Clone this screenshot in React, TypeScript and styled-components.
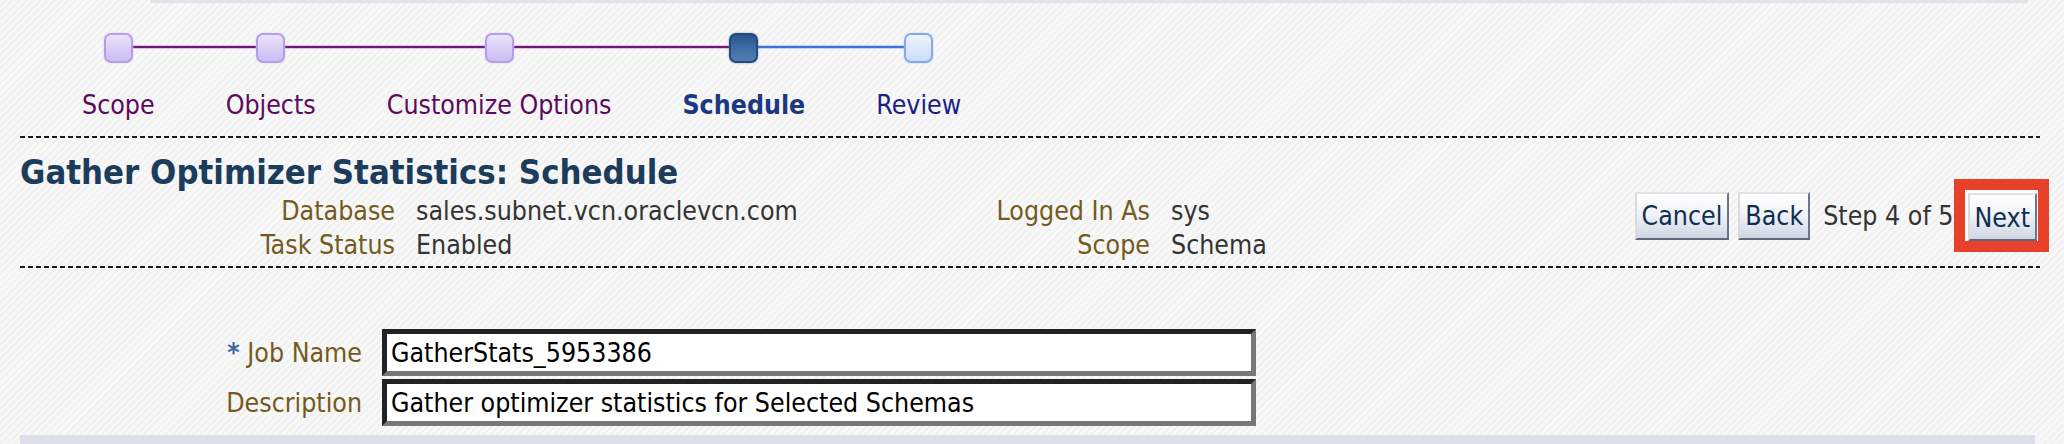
import React from "react";
import styled, { createGlobalStyle, css } from "styled-components";

const GlobalStyle = createGlobalStyle`
  html, body {
    margin: 0;
    padding: 0;
  }
  body {
    width: 2064px;
    height: 444px;
    overflow: hidden;
    background-color: #f6f6f6;
    background-image: repeating-linear-gradient(
      135deg,
      #f8f8f8 0px,
      #f8f8f8 3px,
      #f1f1f1 3px,
      #f1f1f1 5px
    );
    font-family: "DejaVu Sans Condensed", "DejaVu Sans", Verdana, sans-serif;
    font-stretch: condensed;
  }
`;

type StepState = "done" | "current" | "todo";

const steps: { label: string; state: StepState }[] = [
  { label: "Scope", state: "done" },
  { label: "Objects", state: "done" },
  { label: "Customize Options", state: "done" },
  { label: "Schedule", state: "current" },
  { label: "Review", state: "todo" },
];

const PURPLE_LINE = "#6c1a78";
const BLUE_LINE = "#3f6fd8";

export default function App() {
  return (
    <>
      <GlobalStyle />
      <Page>
        <TopBar />
        <Train>
          {steps.map((s, i) => {
            const leftColor =
              i > 0 ? (s.state === "todo" ? BLUE_LINE : PURPLE_LINE) : undefined;
            const rightColor =
              i < steps.length - 1
                ? steps[i + 1].state === "todo"
                  ? BLUE_LINE
                  : PURPLE_LINE
                : undefined;
            return (
              <Step key={s.label}>
                <NodeRow $left={leftColor} $right={rightColor}>
                  <Node $state={s.state} />
                </NodeRow>
                <StepLabel $state={s.state}>{s.label}</StepLabel>
              </Step>
            );
          })}
        </Train>
        <Dashed $gap={16} />
        <Header>
          <Title>Gather Optimizer Statistics: Schedule</Title>
          <InfoGrid>
            <InfoLabel>Database</InfoLabel>
            <InfoValue>sales.subnet.vcn.oraclevcn.com</InfoValue>
            <InfoLabel>Logged In As</InfoLabel>
            <InfoValue>sys</InfoValue>
            <InfoLabel>Task Status</InfoLabel>
            <InfoValue>Enabled</InfoValue>
            <InfoLabel>Scope</InfoLabel>
            <InfoValue>Schema</InfoValue>
          </InfoGrid>
          <Actions>
            <Button>Cancel</Button>
            <Button>Back</Button>
            <StepText>Step 4 of 5</StepText>
            <Highlight>
              <Button>Next</Button>
            </Highlight>
          </Actions>
        </Header>
        <Dashed $gap={4} />
        <Form>
          <FieldLabel>
            <Required>*</Required> Job Name
          </FieldLabel>
          <TextBox>GatherStats_5953386</TextBox>
          <FieldLabel>Description</FieldLabel>
          <TextBox>Gather optimizer statistics for Selected Schemas</TextBox>
        </Form>
        <BottomBand />
      </Page>
    </>
  );
}

const Page = styled.div`
  display: flex;
  flex-direction: column;
  padding: 0 24px 0 20px;
`;

const TopBar = styled.div`
  height: 3px;
  margin-left: 130px;
  width: 1878px;
  background: #dfe3ea;
`;

const Train = styled.div`
  display: flex;
  gap: 71px;
  margin-top: 30px;
  padding-left: 62px;
`;

const Step = styled.div`
  display: flex;
  flex-direction: column;
  align-items: center;
`;

const lineHalf = (color: string, side: "left" | "right") => css`
  content: "";
  position: absolute;
  top: 12px;
  height: 5px;
  background: linear-gradient(
    ${color === BLUE_LINE ? "#c3d3f5" : "#dcc3e0"} 0 1px,
    ${color} 1px 3px,
    ${color === BLUE_LINE ? "#c3d3f5" : "#dcc3e0"} 3px 4px,
    transparent 4px
  );
  ${side === "left" ? "left: -36px; right: 50%;" : "left: 50%; right: -36px;"}
`;

const NodeRow = styled.div<{ $left?: string; $right?: string }>`
  position: relative;
  align-self: stretch;
  display: flex;
  justify-content: center;
  height: 30px;
  &::before {
    ${(p) => (p.$left ? lineHalf(p.$left, "left") : "display: none;")}
  }
  &::after {
    ${(p) => (p.$right ? lineHalf(p.$right, "right") : "display: none;")}
  }
`;

const nodeStyles: Record<StepState, ReturnType<typeof css>> = {
  done: css`
    background: linear-gradient(#ebe3fc, #cbbcf2);
    border: 2px solid #b69ced;
    box-shadow: 0 0 2px #d7c9f6;
  `,
  current: css`
    background: linear-gradient(#2a578e, #5380b4);
    border: 2px solid #234a78;
    box-shadow: 0 0 2px #6d8fb8;
  `,
  todo: css`
    background: linear-gradient(#eef3fd, #cddcfa);
    border: 2px solid #86a8ef;
    box-shadow: 0 0 2px #b6cbf4;
  `,
};

const Node = styled.div<{ $state: StepState }>`
  position: relative;
  z-index: 1;
  width: 25px;
  height: 26px;
  border-radius: 7px;
  ${(p) => nodeStyles[p.$state]}
`;

const labelColors: Record<StepState, string> = {
  done: "#5b0b5f",
  current: "#1a3982",
  todo: "#1b1e86",
};

const StepLabel = styled.div<{ $state: StepState }>`
  margin-top: 27px;
  font-size: 26.5px;
  line-height: 30px;
  white-space: nowrap;
  color: ${(p) => labelColors[p.$state]};
  font-weight: ${(p) => (p.$state === "current" ? 700 : 400)};
`;

const Dashed = styled.div<{ $gap: number }>`
  height: 2px;
  margin-top: ${(p) => p.$gap}px;
  background-image: repeating-linear-gradient(
    to right,
    #1a1a1a 0px,
    #1a1a1a 5px,
    transparent 5px,
    transparent 8px
  );
`;

const Header = styled.div`
  display: grid;
  grid-template-columns: 1fr auto;
  margin-top: 14px;
`;

const Title = styled.h1`
  grid-column: 1;
  margin: 0;
  font-size: 34.4px;
  line-height: 40px;
  font-weight: 700;
  color: #1c3c5b;
  white-space: nowrap;
`;

const InfoGrid = styled.div`
  grid-column: 1;
  display: grid;
  grid-template-columns: 375px 550px 163px auto;
  column-gap: 21px;
  margin-top: 2px;
  font-size: 26.5px;
  line-height: 34px;
`;

const InfoLabel = styled.div`
  text-align: right;
  color: #735a1d;
  white-space: nowrap;
`;

const InfoValue = styled.div`
  color: #333333;
  white-space: nowrap;
`;

const Actions = styled.div`
  grid-column: 2;
  grid-row: 1 / span 2;
  align-self: start;
  display: flex;
  align-items: center;
  margin-top: 27px;
  margin-right: -9px;
`;

const Button = styled.button`
  height: 48px;
  padding: 0 5px;
  margin-right: 9px;
  font-family: inherit;
  font-stretch: condensed;
  font-size: 26.5px;
  color: #0f2f52;
  background: linear-gradient(#ffffff 0%, #f1f3f8 45%, #cfd6e3 100%);
  border: 2px solid;
  border-color: #e2e2e2 #6e7685 #5f6878 #dadada;
  cursor: pointer;
  &:last-child {
    margin-right: 0;
  }
`;

const StepText = styled.span`
  margin-left: 4px;
  font-size: 26.5px;
  color: #333333;
  white-space: nowrap;
`;

const Highlight = styled.div`
  display: flex;
  border: 11px solid #e8412b;
  padding: 3px 1px 0 3px;
  background: #ffffff;
`;

const Form = styled.div`
  display: grid;
  grid-template-columns: 342px 874px;
  column-gap: 20px;
  row-gap: 3px;
  align-items: center;
  margin-top: 61px;
`;

const FieldLabel = styled.div`
  text-align: right;
  font-size: 26.5px;
  color: #735a1d;
  white-space: nowrap;
`;

const Required = styled.span`
  color: #3f6a9e;
  font-weight: 700;
`;

const TextBox = styled.div`
  box-sizing: border-box;
  height: 47px;
  padding: 0 4px;
  display: flex;
  align-items: center;
  background: #ffffff;
  border: 5px solid;
  border-color: #232323 #777777 #777777 #232323;
  font-size: 26.5px;
  color: #000000;
  white-space: nowrap;
  overflow: hidden;
`;

const BottomBand = styled.div`
  height: 14px;
  margin-top: 9px;
  margin-right: 5px;
  background: #dce0ea;
`;
